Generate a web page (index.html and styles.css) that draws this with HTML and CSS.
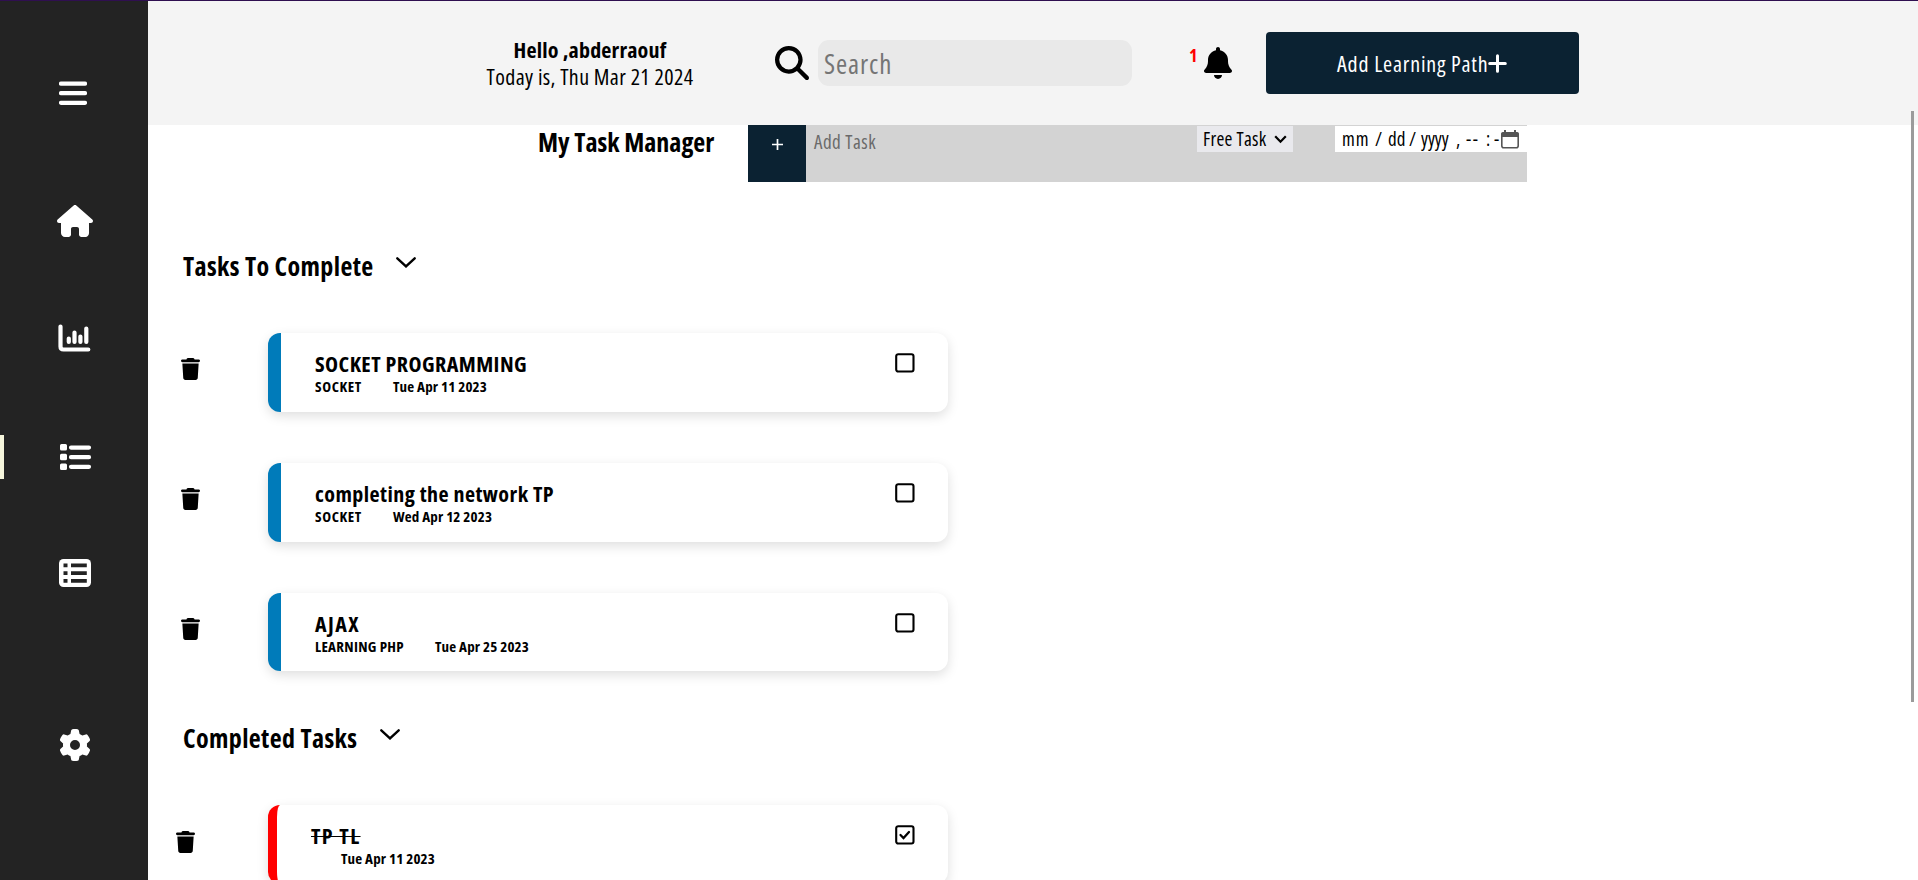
FILE: index.html
```
<!DOCTYPE html>
<html lang="en">
<head>
<meta charset="utf-8">
<title>My Task Manager</title>
<link rel="stylesheet" href="styles.css">
</head>
<body>
<svg class="defs" width="0" height="0">
  <symbol id="trash" viewBox="0 0 448 512" preserveAspectRatio="none"><path d="M135 18C140 7 152 0 164 0h120c12 0 24 7 29 18l7 14h96c18 0 32 14 32 32s-14 32-32 32H32C14 96 0 82 0 64s14-32 32-32h96zM32 128h384l-21 339c-2 25-23 45-48 45H101c-25 0-46-20-48-45z"/></symbol>
  <symbol id="box" viewBox="0 0 20 20"><rect x="1.2" y="1.2" width="17.3" height="17.3" rx="2" fill="none" stroke="#000" stroke-width="2.1"/></symbol>
  <symbol id="down" viewBox="0 0 20 11"><path d="M1.3 1.3 10 9.4l8.7-8.1" fill="none" stroke="#000" stroke-width="2.4" stroke-linecap="round"/></symbol>
</svg>
<div class="app">
  <nav class="sidebar">
    <a class="nav nav-menu"><svg width="28" height="24" viewBox="0 0 28 24"><path d="M2 2.6h24M2 12.2h24M2 21.8h24" stroke="#fff" stroke-width="4.2" stroke-linecap="round"/></svg></a>
    <a class="nav nav-home"><svg width="36" height="32" viewBox="0 0 576 512"><path fill="#fff" d="M575.8 255.5c0 18-15 32.1-32 32.1h-32l.7 160.2c.2 35.500-25 64.200-56.500 64.200H392c-22 0-40-18-40-40v-88c0-18-14-32-32-32h-64c-18 0-32 14-32 32v88c0 22-18 40-40 40h-56c-35 0-64-28-64-64V287.600H32c-18 0-32-14-32-32.100 0-9 3-17 10-24L266.400 8c7-7 15-8 22-8s15 2 21 7l255.400 224.500c8 7 12 15 11 24z"/></svg></a>
    <a class="nav nav-chart"><svg width="33" height="28" viewBox="0 0 33 28" fill="none" stroke="#fff" stroke-linecap="round"><path stroke-width="4.2" d="M2.500 2.500v20q0 3 3 3h24.800M28.300 4.500v13.500"/><path stroke-width="4.200" d="M10.800 14.500v3.500M16.500 8.500v9.500M22.400 12.500v5.500"/></svg></a>
    <a class="nav nav-list active"><svg width="32" height="26" viewBox="0 0 32 26"><path fill="#fff" d="M1.500 0h4q1.500 0 1.500 1.500v3.500q0 1.500-1.500 1.500h-4Q0 6.500 0 5V1.500Q0 0 1.500 0zM1.500 9.800h4q1.500 0 1.500 1.500v3.500q0 1.500-1.500 1.500h-4Q0 16.300 0 14.800v-3.500q0-1.500 1.500-1.500zM1.500 19.500h4q1.500 0 1.500 1.500v3.500q0 1.500-1.500 1.500h-4Q0 26 0 24.500V21q0-1.500 1.500-1.500z"/><path d="M11 3.600h18M11 13.200h18M11 22.800h18" stroke="#fff" stroke-width="4.200" stroke-linecap="round"/></svg></a>
    <a class="nav nav-table"><svg width="32" height="28" viewBox="0 0 32 28"><rect width="32" height="28" rx="4.500" fill="#fff"/><path fill="#232323" d="M4.500 4.500h4v3.800h-4zM12 4.500h15.800v3.800H12zM4.500 12.200h4V16h-4zM12 12.200h15.800V16H12zM4.500 20h4v3.800h-4zM12 20h15.800v3.800H12z"/></svg></a>
    <a class="nav nav-gear"><svg width="32" height="32" viewBox="0 0 512 512"><path fill="#fff" d="M495.900 166.600c3.200 8.700 .5 18.400-6.400 24.600l-43.300 39.400c1.100 8.300 1.700 16.800 1.700 25.400s-.6 17.100-1.700 25.400l43.300 39.400c6.900 6.200 9.600 15.900 6.400 24.600c-4.400 11.900-9.700 23.300-15.800 34.300l-4.700 8.100c-6.600 11-14 21.400-22.100 31.200c-5.900 7.200-15.700 9.600-24.500 6.800l-55.700-17.700c-13.400 10.300-28.200 18.900-44 25.400l-12.500 57.100c-2 9.100-9 16.300-18.200 17.800c-13.800 2.300-28 3.500-42.500 3.500s-28.700-1.200-42.500-3.500c-9.200-1.500-16.200-8.700-18.200-17.800l-12.500-57.100c-15.800-6.500-30.600-15.100-44-25.400L83.100 425.900c-8.800 2.800-18.600 .3-24.500-6.800c-8.100-9.800-15.500-20.200-22.100-31.200l-4.700-8.100c-6.100-11-11.400-22.400-15.800-34.300c-3.200-8.700-.5-18.400 6.400-24.600l43.300-39.400C64.600 273.100 64 264.600 64 256s.6-17.100 1.700-25.400L22.400 191.200c-6.900-6.200-9.600-15.900-6.400-24.600c4.400-11.900 9.700-23.300 15.800-34.300l4.700-8.100c6.600-11 14-21.400 22.100-31.200c5.900-7.200 15.700-9.600 24.500-6.800l55.700 17.700c13.400-10.300 28.200-18.900 44-25.400l12.500-57.100c2-9.100 9-16.300 18.200-17.800C227.300 1.200 241.500 0 256 0s28.700 1.200 42.500 3.500c9.200 1.500 16.200 8.700 18.200 17.800l12.500 57.100c15.800 6.500 30.600 15.100 44 25.400l55.700-17.700c8.800-2.800 18.600-.3 24.500 6.800c8.100 9.800 15.500 20.200 22.100 31.200l4.700 8.100c6.100 11 11.400 22.400 15.800 34.300zM256 336a80 80 0 1 0 0-160 80 80 0 1 0 0 160z"/></svg></a>
  </nav>
  <main class="main">
    <header class="header">
      <div class="greeting"><b class="hello">Hello ,abderraouf</b><span class="today">Today is, Thu Mar 21 2024</span></div>
      <svg class="search-icon" width="34" height="34" viewBox="0 0 512 512"><path d="M416 208c0 45.900-14.900 88.300-40 122.700L502.600 457.400c12.500 12.500 12.500 32.800 0 45.300s-32.800 12.500-45.300 0L330.700 376c-34.400 25.200-76.800 40-122.700 40C93.100 416 0 322.900 0 208S93.100 0 208 0S416 93.100 416 208zM208 352a144 144 0 1 0 0-288 144 144 0 1 0 0 288z"/></svg>
      <div class="search">Search</div>
      <span class="count">1</span>
      <svg class="bell" width="28" height="32" viewBox="0 0 448 512"><path d="M224 0c-17.700 0-32 14.300-32 32V51.200C119 66 64 130.600 64 208v18.800c0 47-17.300 92.400-48.500 127.600l-7.400 8.300c-8.400 9.400-10.400 22.900-5.300 34.400S19.400 416 32 416H416c12.600 0 24-7.400 29.200-18.900s3.100-25-5.300-34.400l-7.400-8.300C401.300 319.200 384 273.900 384 226.800V208c0-77.400-55-142-128-156.800V32c0-17.700-14.300-32-32-32zm45.300 493.300c12-12 18.700-28.300 18.700-45.300H160c0 17 6.700 33.300 18.700 45.300s28.300 18.700 45.300 18.700s33.300-6.700 45.300-18.700z"/></svg>
      <button class="add-path"><span>Add Learning Path</span><svg width="19" height="19" viewBox="0 0 19 19"><path d="M9.500 1.700v15.600M1.700 9.500h15.600" stroke="#fff" stroke-width="3" stroke-linecap="round"/></svg></button>
    </header>
    <section class="manager">
      <h1 class="title">My Task Manager</h1>
      <div class="bar">
        <div class="plus"><svg width="11" height="11" viewBox="0 0 11 11"><path d="M5.500 0v11M0 5.500h11" stroke="#fff" stroke-width="1.700"/></svg></div>
        <div class="add-task">Add Task</div>
        <div class="select"><span>Free Task</span><svg width="13" height="9" viewBox="0 0 13 9"><path d="m1.200 1.200 5.300 5.500 5.300-5.500" fill="none" stroke="#000" stroke-width="2.200"/></svg></div>
        <div class="date">
          <span class="mm">mm</span><span class="s1">/</span><span class="dd">dd</span><span class="s2">/</span><span class="yy">yyyy</span><span class="cm">,</span><span class="hh">--</span><span class="cl">:</span><span class="mi">-</span>
          <svg width="18" height="19" viewBox="0 0 18 19"><rect x=".8" y="3" width="16.400" height="14.800" rx="2" fill="none" stroke="#555" stroke-width="1.600"/><path fill="#555" d="M0 7V4q0-2 2-2h1V0h2v2h8V0h2v2h1q2 0 2 2v3z"/></svg>
        </div>
      </div>
    </section>
    <section class="group">
      <h2 class="heading"><span>Tasks To Complete</span><svg width="20" height="11"><use href="#down"/></svg></h2>
      <div class="row"><svg class="trash" width="19" height="22"><use href="#trash"/></svg><div class="card"><div class="info"><b class="name">SOCKET PROGRAMMING</b><div class="meta"><span class="path">SOCKET</span><span>Tue Apr 11 2023</span></div></div><svg width="20" height="20"><use href="#box"/></svg></div></div>
      <div class="row"><svg class="trash" width="19" height="22"><use href="#trash"/></svg><div class="card"><div class="info"><b class="name">completing the network TP</b><div class="meta"><span class="path">SOCKET</span><span>Wed Apr 12 2023</span></div></div><svg width="20" height="20"><use href="#box"/></svg></div></div>
      <div class="row"><svg class="trash" width="19" height="22"><use href="#trash"/></svg><div class="card short"><div class="info"><b class="name wide">AJAX</b><div class="meta"><span class="path long">LEARNING PHP</span><span>Tue Apr 25 2023</span></div></div><svg width="20" height="20"><use href="#box"/></svg></div></div>
    </section>
    <section class="group completed">
      <h2 class="heading"><span>Completed Tasks</span><svg width="20" height="11"><use href="#down"/></svg></h2>
      <div class="row"><svg class="trash" width="19" height="22"><use href="#trash"/></svg><div class="card"><div class="info"><b class="name wide">TP TL</b><div class="meta"><span>Tue Apr 11 2023</span></div></div><svg width="20" height="20"><use href="#box"/><path d="m5.500 10 3 3 5.500-6" fill="none" stroke="#000" stroke-width="2.300" stroke-linecap="round"/></svg></div></div>
    </section>
  </main>
</div>
<div class="scrollbar"></div>
</body>
</html>
```
FILE: styles.css
```
* { box-sizing: border-box; }
html, body { margin: 0; height: 100%; overflow: hidden; }
body {
  background: #fff;
  color: #000;
  font-family: "Open Sans", "Noto Sans", sans-serif;
  font-stretch: 75%;
  font-weight: 400;
  white-space: nowrap;
}
svg { display: block; flex: none; }
.defs { position: absolute; }
.app { display: flex; height: 880px; border-top: 1px solid #2f0f50; }

/* Sidebar */
.sidebar { flex: none; width: 148px; background: #232323; display: flex; flex-direction: column; }
.nav { display: flex; align-items: center; height: 44px; padding-left: 58px; }
.nav-menu { margin-top: 70px; padding-left: 59px; }
.nav-home { margin-top: 84px; padding-left: 57px; }
.nav-chart { margin-top: 73px; }
.nav-list { margin-top: 75px; }
.nav-table { margin-top: 72px; padding-left: 58.5px; }
.nav-gear { margin-top: 128px; padding-left: 59px; }
.active { border-left: 4px solid #f5f5dc; padding-left: 55.5px; }

/* Header */
.main { flex: 1; height: 879px; overflow: hidden; }
.header { height: 124px; background: #f4f4f4; display: flex; align-items: flex-start; padding-left: 338px; }
.greeting { width: 208px; margin-top: 35px; display: flex; flex-direction: column; align-items: center; font-size: 22px; line-height: 27px; }
.hello { font-weight: 700; letter-spacing: .19px; }
.today { letter-spacing: .36px; }
.search-icon { margin: 45px 0 0 81px; }
.search { width: 314px; height: 46px; margin: 39px 0 0 9px; padding-left: 6px; border-radius: 11px; background: #e9e9e9; color: #757575; font-size: 27px; line-height: 48px; letter-spacing: .9px; }
.count { width: 15px; margin: 44px 0 0 57px; color: #f00; font-size: 18px; font-weight: 700; line-height: 20px; }
.bell { margin-top: 46px; }
.add-path { display: flex; align-items: center; width: 313px; height: 62px; margin: 31px 0 0 34px; padding: 0 0 0 71px; border: 0; border-radius: 4px; background: #0b2232; color: #fff; font: inherit; font-size: 22px; letter-spacing: .8px; }
.add-path span { width: 151px; text-align: left; }

/* New task bar */
.manager { display: flex; height: 57px; padding-left: 390px; }
.title { width: 210px; margin: 0; font-size: 26px; font-weight: 700; line-height: 34px; letter-spacing: 0; }
.bar { display: flex; width: 779px; background: #d3d3d3; }
.plus { width: 58px; background: #0b2232; display: flex; justify-content: center; padding-top: 14px; }
.add-task { width: 391px; padding-left: 8px; color: #6a6a6a; font-size: 19px; line-height: 34px; letter-spacing: .5px; }
.select { display: flex; align-items: center; width: 96px; height: 26px; margin-top: 1px; padding-left: 6px; background: #e9e9ed; font-size: 19px; line-height: 26px; letter-spacing: .28px; }
.select span { width: 71px; }
.date { display: flex; align-items: center; width: 192px; height: 26px; margin: 1px 0 0 42px; padding-left: 7px; background: #fff; font-size: 19px; line-height: 26px; }
.mm { width: 33px; letter-spacing: 1px; }
.s1 { width: 13px; }
.dd { width: 21px; }
.s2 { width: 12px; }
.yy { width: 35px; }
.cm { width: 10px; }
.hh { width: 20px; letter-spacing: 1.500px; }
.cl { width: 8px; }
.mi { width: 7px; }

/* Task lists */
.group { padding: 68px 0 0 33px; }
.heading { display: flex; align-items: flex-start; height: 83px; margin: 0; padding-left: 2px; font-size: 26px; font-weight: 700; line-height: 32px; letter-spacing: .38px; }
.heading span { width: 213px; }
.heading svg { margin-top: 7px; }
.row { display: flex; align-items: flex-start; height: 130px; }
.trash { margin-top: 25px; }
.card { display: flex; width: 680px; height: 79px; margin-left: 68px; padding: 20px 0 0 34px; border-left: 13px solid #007bba; border-radius: 12px; background: #fff; box-shadow: 0 4px 12px rgba(0,0,0,.13); }
.short { height: 78px; }
.info { width: 580px; margin-top: -1px; display: flex; flex-direction: column; }
.name { align-self: flex-start; font-size: 22px; font-weight: 700; line-height: 22px; letter-spacing: .45px; }
.wide { letter-spacing: 1.4px; }
.meta { display: flex; gap: 30px; font-size: 15px; font-weight: 700; line-height: 24px; letter-spacing: .15px; }
.path { width: 48px; letter-spacing: .6px; }
.long { width: 90px; letter-spacing: .3px; }
.completed { margin-top: -1px; padding-top: 0; }
.completed .heading span { width: 197px; }
.completed .trash { margin: 26px 0 0 -5px; }
.completed .card { margin-left: 73px; border-left: 9px solid #f00; }
.completed .info { width: 584px; }
.completed .name { text-decoration: line-through; text-decoration-thickness: 1px; }
.completed .meta { padding-left: 30px; }

.scrollbar { position: absolute; left: 1911px; top: 111px; width: 3px; height: 591px; background: #9b9b9b; }
```
